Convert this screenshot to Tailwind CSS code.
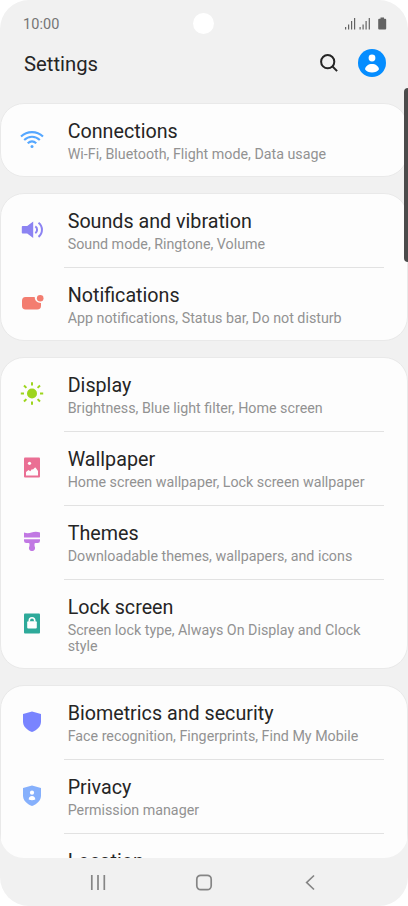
<!DOCTYPE html>
<html lang="en">
<head>
<meta charset="utf-8">
<title>Settings</title>
<script src="https://cdn.jsdelivr.net/npm/@tailwindcss/browser@4"></script>
</head>
<body class="bg-white font-[Roboto,sans-serif]">
<div class="relative flex h-[906px] w-[408px] flex-col overflow-hidden rounded-[29px] bg-[#f1f1f1] text-[#252525]">
  <div class="absolute left-[193px] top-[13px] size-[21px] rounded-full bg-white"></div>
  <div class="absolute left-[404px] top-[88px] z-10 h-[174px] w-[6px] rounded-l-[4px] bg-[#4b4b4b]"></div>

  <header class="h-[103px] shrink-0">
    <div class="flex h-[46px] items-center justify-between pl-[23px] pr-[21px]">
      <span class="pt-[3px] text-[14.5px] tracking-[0.1px] text-[#757575]">10:00</span>
      <svg class="h-[13px] w-[43px]" viewBox="0 0 43 13" fill="#636363">
        <path d="M1 10h1.2v2.500H1zM4 7.500h1.200v5H4zM7 4h1.200v8.500H7zM10 1h1.200v11.500H10zM15.500 10h1.200v2.500h-1.200zM18.500 7.500h1.200v5h-1.200zM21.500 4h1.200v8.500h-1.200zM24.700 1h1.200v11.500h-1.200z"/>
        <path d="M36.500 .5h3.500v1.300h1.200q1 0 1 1v8.700q0 1-1 1h-6q-1 0-1-1V2.800q0-1 1-1h1.300z"/>
      </svg>
    </div>
    <div class="flex h-[34px] items-center pl-[24px] pr-[22px]">
      <h1 class="grow pt-[2px] text-[20.300px]">Settings</h1>
      <svg class="mr-[19px] size-[20px]" viewBox="0 0 20 20" fill="none" stroke="#252525" stroke-width="2"><circle cx="8.700" cy="8.700" r="6.600"/><path d="M13.300 13.300l4.800 4.800"/></svg>
      <svg class="size-[28px]" viewBox="0 0 28 28"><circle cx="14" cy="14" r="14" fill="#058dff"/><g fill="#fff"><circle cx="14" cy="9" r="3.400"/><path d="M7 20.200C7.600 17 10.300 15 14 15s6.400 2 7 5.200C19.500 22.300 17 23.500 14 23.500s-5.500-1.200-7-3.300z"/></g></svg>
    </div>
  </header>

  <main class="flex h-[755px] shrink-0 flex-col gap-[16px] overflow-hidden rounded-b-[24px]">
    <section class="h-[74px] shrink-0 rounded-[24px] border border-[#e9e9e9] bg-[#fdfdfd]">
      <div class="flex h-[72px] pl-[19px] pt-[15px]">
        <svg class="mt-[8px] size-[24px] shrink-0" viewBox="0 0 24 24" fill="none" stroke="#55a7ff" stroke-width="2.100"><path d="M1 9.500C7.200 3.600 16.800 3.600 23 9.500M4.200 13c4.500-4.300 11.100-4.300 15.600 0M7.700 16.200c2.600-2.300 6-2.300 8.600 0"/><circle cx="12" cy="19.500" r="1.500" fill="#55a7ff" stroke="none"/></svg>
        <div class="pl-[23.700px] pt-px"><h2 class="text-[19.700px] leading-[24px]">Connections</h2><p class="mt-[2px] text-[14.270px] leading-[16.500px] text-[#929292]">Wi-Fi, Bluetooth, Flight mode, Data usage</p></div>
      </div>
    </section>

    <section class="h-[148px] shrink-0 rounded-[24px] border border-[#e9e9e9] bg-[#fdfdfd]">
      <div class="flex h-[73px] pl-[19px] pt-[15px]">
        <svg class="mt-[8px] size-[24px] shrink-0" viewBox="0 0 24 24" fill="#8c83f2"><path d="M2.600 9.100h4.600L13.200 4.500v16.600l-6-4.600H2.600q-.8 0-.8-.8V9.900q0-.8.8-.8z"/><path d="M15.300 9.400c2.400 1.600 2.400 5.200 0 6.800M18.500 5.700c4.600 3.500 4.600 10.700 0 14.200" fill="none" stroke="#8c83f2" stroke-width="2"/></svg>
        <div class="pl-[23.700px] pt-px"><h2 class="text-[19.700px] leading-[24px]">Sounds and vibration</h2><p class="mt-[2px] text-[14.270px] leading-[16.500px] text-[#929292]">Sound mode, Ringtone, Volume</p></div>
      </div>
      <div class="ml-[63px] mr-[23px] h-px bg-[#e2e2e2]"></div>
      <div class="flex h-[72px] pl-[19px] pt-[15px]">
        <svg class="mt-[8px] size-[24px] shrink-0" viewBox="0 0 24 24" fill="#f37d70"><path d="M5.500 6h9.200c.1 3.500 2.400 5.800 6.300 5.900v2.800q0 3.800-3.800 3.800H5.500q-3.500 0-3.500-3.800V9.800Q2 6 5.500 6z"/><circle cx="20.200" cy="7.300" r="3.300"/></svg>
        <div class="pl-[23.700px] pt-px"><h2 class="text-[19.700px] leading-[24px]">Notifications</h2><p class="mt-[2px] text-[14.270px] leading-[16.500px] text-[#929292]">App notifications, Status bar, Do not disturb</p></div>
      </div>
    </section>

    <section class="h-[312px] shrink-0 rounded-[24px] border border-[#e9e9e9] bg-[#fdfdfd]">
      <div class="flex h-[73px] pl-[19px] pt-[15px]">
        <svg class="mt-[8px] size-[24px] shrink-0" viewBox="0 0 24 24"><circle cx="12" cy="12.500" r="5" fill="#9dd51d"/><path d="M12 1.300v3.200M12 20.500v3.200M.8 12.500H4M20 12.500h3.200M4 4.500l2.400 2.400M17.600 18.100l2.400 2.400M20 4.500l-2.400 2.400M6.400 18.100L4 20.500" stroke="#9dd51d" stroke-width="2"/></svg>
        <div class="pl-[23.700px] pt-px"><h2 class="text-[19.700px] leading-[24px]">Display</h2><p class="mt-[2px] text-[14.270px] leading-[16.500px] text-[#929292]">Brightness, Blue light filter, Home screen</p></div>
      </div>
      <div class="ml-[63px] mr-[23px] h-px bg-[#e2e2e2]"></div>
      <div class="flex h-[73px] pl-[19px] pt-[15px]">
        <svg class="mt-[8px] size-[24px] shrink-0" viewBox="0 0 24 24"><rect x="4" y="2.500" width="16" height="20" rx="1" fill="#ea6f94"/><circle cx="9.500" cy="8.300" r="1.600" fill="#fdfdfd"/><path d="M6 20.500v-3.500l2.500-2 1.800 1.200 1.500-2 1.200.4 1.700-1.900q.5-.5 1 0l2.300 3.300v4.500z" fill="#fdfdfd"/></svg>
        <div class="pl-[23.700px] pt-px"><h2 class="text-[19.700px] leading-[24px]">Wallpaper</h2><p class="mt-[2px] text-[14.270px] leading-[16.500px] text-[#929292]">Home screen wallpaper, Lock screen wallpaper</p></div>
      </div>
      <div class="ml-[63px] mr-[23px] h-px bg-[#e2e2e2]"></div>
      <div class="flex h-[73px] pl-[19px] pt-[15px]">
        <svg class="mt-[8px] size-[24px] shrink-0" viewBox="0 0 24 24" fill="#c178e3"><path d="M4 3.500c3 1 5 .8 7.500 0s5.500-1 8.500 0v5H4zM4 10.200h16v1.600q0 2.300-2.300 2.300h-2.200q-1 0-1 1v1.200q0 .7.300 1.400c.9 2-.5 4.400-2.800 4.400s-3.700-2.400-2.800-4.400q.3-.7.300-1.400v-1.200q0-1-1-1H6.300Q4 14.100 4 11.800z"/></svg>
        <div class="pl-[23.700px] pt-px"><h2 class="text-[19.700px] leading-[24px]">Themes</h2><p class="mt-[2px] text-[14.270px] leading-[16.500px] text-[#929292]">Downloadable themes, wallpapers, and icons</p></div>
      </div>
      <div class="ml-[63px] mr-[23px] h-px bg-[#e2e2e2]"></div>
      <div class="flex h-[88px] pl-[19px] pt-[15px]">
        <svg class="mt-[16px] size-[24px] shrink-0" viewBox="0 0 24 24"><rect x="4" y="2.500" width="16" height="20" rx="1" fill="#2eaa9a"/><rect x="7.200" y="10.300" width="9.600" height="7.200" rx="1" fill="#fff"/><path d="M9.300 10.500V9.400a2.700 2.700 0 0 1 5.400 0v1.100" fill="none" stroke="#fff" stroke-width="1.600"/></svg>
        <div class="pl-[23.700px] pt-px"><h2 class="text-[19.700px] leading-[24px]">Lock screen</h2><p class="mt-[2px] text-[14.270px] leading-[16px] text-[#929292]">Screen lock type, Always On Display and Clock<br>style</p></div>
      </div>
    </section>

    <section class="h-[222px] shrink-0 rounded-t-[24px] border border-[#e9e9e9] bg-[#fdfdfd]">
      <div class="flex h-[73px] pl-[19px] pt-[15px]">
        <svg class="mt-[8px] size-[24px] shrink-0" viewBox="0 0 24 24"><path d="M12 2.500l9 2.500v7.200c0 5.400-3.700 8.600-9 10.800-5.300-2.200-9-5.400-9-10.800V5z" fill="#7984ff"/></svg>
        <div class="pl-[23.700px] pt-px"><h2 class="text-[19.700px] leading-[24px]">Biometrics and security</h2><p class="mt-[2px] text-[14.270px] leading-[16.500px] text-[#929292]">Face recognition, Fingerprints, Find My Mobile</p></div>
      </div>
      <div class="ml-[63px] mr-[23px] h-px bg-[#e2e2e2]"></div>
      <div class="flex h-[73px] pl-[19px] pt-[15px]">
        <svg class="mt-[8px] size-[24px] shrink-0" viewBox="0 0 24 24"><path d="M12 2.500l9 2.500v7.200c0 5.400-3.700 8.600-9 10.800-5.300-2.200-9-5.400-9-10.800V5z" fill="#86b0fc"/><circle cx="12" cy="9.700" r="2.100" fill="#fff"/><path d="M8.700 16.500c0-2.100 1.300-3.500 3.300-3.500s3.300 1.400 3.300 3.500q-3.300 1.300-6.600 0z" fill="#fff"/></svg>
        <div class="pl-[23.700px] pt-px"><h2 class="text-[19.700px] leading-[24px]">Privacy</h2><p class="mt-[2px] text-[14.270px] leading-[16.500px] text-[#929292]">Permission manager</p></div>
      </div>
      <div class="ml-[63px] mr-[23px] h-px bg-[#e2e2e2]"></div>
      <div class="h-[72px] pl-[66.700px] pt-[16px]"><h2 class="text-[19.700px] leading-[24px]">Location</h2></div>
    </section>
  </main>

  <nav class="flex h-[48px] shrink-0 items-center justify-between px-[88px]">
    <svg class="size-[20px]" viewBox="0 0 20 20" stroke="#858585" stroke-width="1.700"><path d="M3.800 3v15M10 3v15M16.300 3v15"/></svg>
    <svg class="size-[20px]" viewBox="0 0 20 20" fill="none" stroke="#858585" stroke-width="1.700"><rect x="2.800" y="3.300" width="14.400" height="14.400" rx="4"/></svg>
    <svg class="size-[20px]" viewBox="0 0 20 20" fill="none" stroke="#858585" stroke-width="1.700"><path d="M14 3.500l-7.300 7 7.300 7"/></svg>
  </nav>
</div>
</body>
</html>
